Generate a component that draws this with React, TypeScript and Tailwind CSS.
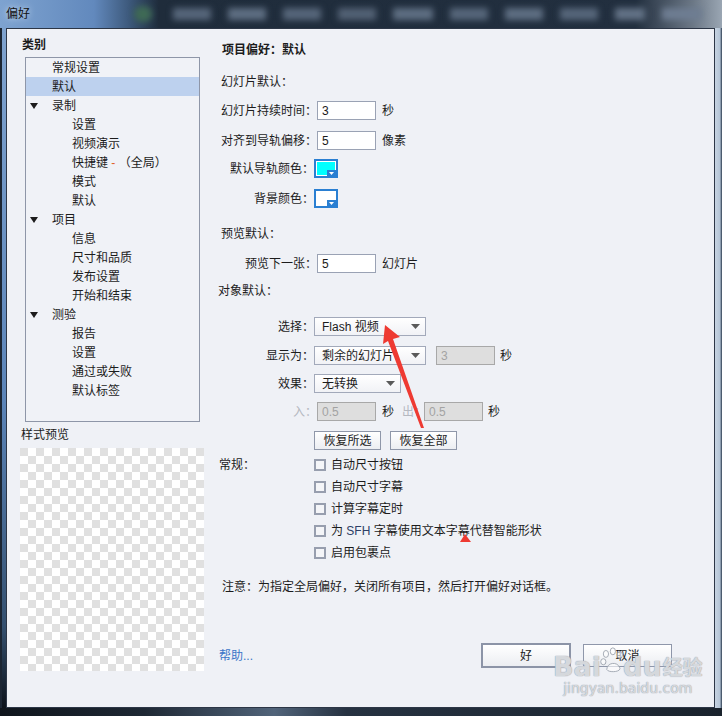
import React from "react";

const tree: { label: React.ReactNode; level: number; open?: boolean; selected?: boolean }[] = [
  { label: "常规设置", level: 1 },
  { label: "默认", level: 1, selected: true },
  { label: "录制", level: 1, open: true },
  { label: "设置", level: 2 },
  { label: "视频演示", level: 2 },
  {
    label: (
      <>
        快捷键 <span className="text-[#e0602a]">-</span> （全局）
      </>
    ),
    level: 2,
  },
  { label: "模式", level: 2 },
  { label: "默认", level: 2 },
  { label: "项目", level: 1, open: true },
  { label: "信息", level: 2 },
  { label: "尺寸和品质", level: 2 },
  { label: "发布设置", level: 2 },
  { label: "开始和结束", level: 2 },
  { label: "测验", level: 1, open: true },
  { label: "报告", level: 2 },
  { label: "设置", level: 2 },
  { label: "通过或失败", level: 2 },
  { label: "默认标签", level: 2 },
];

function Arrow() {
  return (
    <svg width="9" height="5" viewBox="0 0 9 5">
      <polygon points="0,0 9,0 4.5,5" fill="#5a5a5a" />
    </svg>
  );
}

function TextBox({ value, disabled }: { value: string; disabled?: boolean }) {
  return (
    <div
      className={`w-[59px] h-[19px] border flex items-center pl-[4px] ${
        disabled ? "bg-[#dedede] border-[#a8a8a8] text-[#a3a3a3]" : "bg-white border-[#9aa2b4] text-[#1a1a1a]"
      }`}
    >
      {value}
    </div>
  );
}

function Select({ value, wide }: { value: string; wide?: boolean }) {
  return (
    <div
      className={`${wide ? "w-[112px]" : "w-[87px]"} h-[19px] border border-[#a2a9ba] bg-[linear-gradient(180deg,#ffffff,#f1f2f6)] flex items-center justify-between pl-[7px] pr-[5px]`}
    >
      <span>{value}</span>
      <Arrow />
    </div>
  );
}

function Swatch({ color }: { color: string }) {
  return (
    <div className="relative w-[24px] h-[19px] border-2 border-[#2a7fd2] bg-white p-[1px]">
      <div className={`w-full h-full ${color}`} />
      <div className="absolute right-0 bottom-0 w-[9px] h-[6px] bg-[#2a7fd2] flex items-center justify-center">
        <svg width="5" height="3" viewBox="0 0 5 3">
          <polygon points="0,0 5,0 2.5,3" fill="#ffffff" />
        </svg>
      </div>
    </div>
  );
}

function Btn({ children }: { children: React.ReactNode }) {
  return (
    <div className="w-[67px] h-[19px] border border-[#8f97a9] bg-[linear-gradient(180deg,#ffffff,#eceef2)] flex items-center justify-center">
      {children}
    </div>
  );
}

function Check({ label }: { label: React.ReactNode }) {
  return (
    <div className="flex items-center">
      <div className="w-[12px] h-[12px] border-2 border-[#979eae] bg-[#f4f5f8]" />
      <span className="ml-[5px]">{label}</span>
    </div>
  );
}

export default function App() {
  return (
    <div className="relative w-[722px] h-[716px] overflow-hidden flex flex-col bg-[#1b2530] font-['Liberation_Sans','Noto_Sans_CJK_SC',sans-serif] text-[12px] leading-[16px] text-[#1c1c1c]">
      {/* title bar */}
      <div className="h-[28px] flex items-center bg-[linear-gradient(90deg,#7ea3d0_0%,#6289bd_13%,#3c587a_18%,#1f2c3b_22%,#222f3f_88%,#6c7886_96%,#9aa6b3_100%)]">
        <span className="pl-[6px] w-[134px] text-[#111] [text-shadow:0_0_6px_#dbe7f5]">偏好</span>
        <div className="w-[18px] h-[16px] rounded-full bg-[#3f6a55] blur-[3px]" />
        <div className="flex gap-[17px] ml-[21px] blur-[3px]">
          <div className="w-[38px] h-[12px] bg-[#56667a]" />
          <div className="w-[38px] h-[12px] bg-[#5e6e82]" />
          <div className="w-[38px] h-[12px] bg-[#56667a]" />
          <div className="w-[38px] h-[12px] bg-[#526174]" />
          <div className="w-[40px] h-[12px] bg-[#5e6e82]" />
          <div className="w-[38px] h-[12px] bg-[#56667a]" />
          <div className="w-[38px] h-[12px] bg-[#5e6e82]" />
          <div className="w-[38px] h-[12px] bg-[#56667a]" />
          <div className="w-[30px] h-[12px] bg-[#637286]" />
          <div className="w-[40px] h-[12px] bg-[#6e7d92]" />
        </div>
      </div>

      <div className="flex flex-1">
        {/* left frame */}
        <div className="w-[6px] bg-[linear-gradient(180deg,#7fa3cf,#5b84b8_55%,#34506f_88%,#0d131b)] border-l-2 border-[#1c2633]" />

        {/* client area */}
        <div className="flex-1 flex border border-[#2c3646] bg-[#eff1f6]">
          {/* left column */}
          <div className="w-[203px] pl-[13px] pt-[8px] flex flex-col">
            <div className="ml-[2px] h-[16px] font-bold">类别</div>
            <div className="mt-[4px] ml-[5px] w-[175px] h-[365px] border border-[#8e96a8] bg-[#f0f2f7] flex flex-col">
              {tree.map((t, i) => (
                <div key={i} className={`h-[19px] flex items-center ${t.selected ? "bg-[#bdd1ee]" : ""}`}>
                  <div className="w-[26px] pl-[4px] flex items-center">
                    {t.open && (
                      <svg width="8" height="6" viewBox="0 0 8 6">
                        <polygon points="0,0 8,0 4,6" fill="#1c1c1c" />
                      </svg>
                    )}
                  </div>
                  <span className={t.level === 2 ? "ml-[20px]" : ""}>{t.label}</span>
                </div>
              ))}
            </div>
            <div className="mt-[5px] ml-[1px] h-[16px]">样式预览</div>
            <div className="mt-[5px] w-[184px] h-[223px] bg-[image:repeating-conic-gradient(#ffffff_0%_25%,#e0e0e0_0%_50%)] bg-[length:16px_16px]" />
          </div>

          {/* right column */}
          <div className="flex-1 flex flex-col pl-[11px] pt-[13px]">
            <div className="h-[16px] ml-[1px] font-bold">项目偏好：默认</div>
            <div className="h-[16px] mt-[16px]">幻灯片默认：</div>

            <div className="h-[19px] mt-[11px] flex items-center">
              <span className="w-[96px]">幻灯片持续时间：</span>
              <TextBox value="3" />
              <span className="ml-[6px]">秒</span>
            </div>
            <div className="h-[19px] mt-[11px] flex items-center">
              <span className="w-[96px]">对齐到导轨偏移：</span>
              <TextBox value="5" />
              <span className="ml-[6px]">像素</span>
            </div>
            <div className="h-[19px] mt-[9px] flex items-center">
              <span className="w-[93px] text-right">默认导轨颜色：</span>
              <Swatch color="bg-[#00ffff]" />
            </div>
            <div className="h-[19px] mt-[11px] flex items-center">
              <span className="w-[93px] text-right">背景颜色：</span>
              <Swatch color="bg-white" />
            </div>

            <div className="h-[16px] mt-[18px]">预览默认：</div>
            <div className="h-[19px] mt-[12px] flex items-center">
              <span className="w-[96px] text-right">预览下一张：</span>
              <TextBox value="5" />
              <span className="ml-[6px]">幻灯片</span>
            </div>

            <div className="h-[16px] mt-[10px] -ml-[3px]">对象默认：</div>
            <div className="h-[19px] mt-[18px] flex items-center">
              <span className="w-[93px] text-right">选择：</span>
              <Select value="Flash 视频" wide />
            </div>
            <div className="h-[19px] mt-[10px] flex items-center">
              <span className="w-[93px] text-right">显示为：</span>
              <Select value="剩余的幻灯片" wide />
              <div className="ml-[10px]">
                <TextBox value="3" disabled />
              </div>
              <span className="ml-[5px]">秒</span>
            </div>
            <div className="h-[19px] mt-[9px] flex items-center">
              <span className="w-[93px] text-right">效果：</span>
              <Select value="无转换" />
            </div>
            <div className="h-[19px] mt-[9px] flex items-center">
              <span className="w-[96px] text-right text-[#b4b8c0]">入：</span>
              <TextBox value="0.5" disabled />
              <span className="ml-[6px]">秒</span>
              <span className="ml-[8px] w-[22px] text-[#b4b8c0]">出：</span>
              <TextBox value="0.5" disabled />
              <span className="ml-[5px]">秒</span>
            </div>
            <div className="h-[19px] mt-[10px] flex items-center ml-[93px] gap-[9px]">
              <Btn>恢复所选</Btn>
              <Btn>恢复全部</Btn>
            </div>

            <div className="mt-[4px] flex flex-col">
              <div className="h-[22px] flex items-center -ml-[2px]">
                <span className="w-[95px]">常规：</span>
                <Check label="自动尺寸按钮" />
              </div>
              <div className="h-[22px] flex items-center ml-[93px]">
                <Check label="自动尺寸字幕" />
              </div>
              <div className="h-[22px] flex items-center ml-[93px]">
                <Check label="计算字幕定时" />
              </div>
              <div className="h-[22px] flex items-center ml-[93px]">
                <Check
                  label={
                    <>
                      为 <span className="text-[#2d3f66]">SFH</span> 字幕使用文本字幕代替智能形状
                    </>
                  }
                />
              </div>
              <div className="h-[22px] flex items-center ml-[93px]">
                <Check label="启用包裹点" />
              </div>
            </div>

            <div className="h-[16px] mt-[15px] ml-[1px]">注意：为指定全局偏好，关闭所有项目，然后打开偏好对话框。</div>

            <div className="h-[25px] mt-[48px] flex items-center -ml-[2px]">
              <span className="w-[262px] text-[#3a76c8]">帮助...</span>
              <div className="w-[90px] h-[25px] border-2 border-[#8c94a7] bg-[linear-gradient(180deg,#ffffff,#eceef2)] flex items-center justify-center">
                好
              </div>
              <div className="ml-[12px] w-[89px] h-[23px] border border-[#8f97aa] bg-[linear-gradient(180deg,#ffffff,#eceef2)] flex items-center justify-center">
                取消
              </div>
            </div>
          </div>
        </div>

        {/* right frame */}
        <div className="w-[7px] bg-[linear-gradient(90deg,#c6d3e1,#b4c4d6_70%,#2a3a4e)]" />
      </div>

      {/* bottom frame */}
      <div className="h-[8px] bg-[linear-gradient(90deg,#0f151c,#1e2834_20%,#51647a_38%,#263241_48%,#1a232d_100%)]" />

      {/* watermark */}
      <div className="absolute left-[553px] top-[646px] flex flex-col items-center pointer-events-none whitespace-nowrap text-white/60 [text-shadow:0_0_1px_#9aa1ab,0_0_1px_#9aa1ab]">
        <div className="flex items-end h-[34px] text-[27px] leading-[27px] font-bold font-['DejaVu_Sans','Noto_Sans_CJK_SC',sans-serif]">
          <span>Bai</span>
          <svg width="26" height="28" viewBox="0 0 30 30" className="mb-[6px] -mx-[2px]">
            <g fill="#ffffff" fillOpacity="0.6" stroke="#9aa1ab" strokeWidth="1">
              <ellipse cx="8" cy="8" rx="3" ry="4" />
              <ellipse cx="16" cy="5" rx="3" ry="4" />
              <ellipse cx="24" cy="9" rx="3" ry="4" />
              <ellipse cx="5" cy="17" rx="3" ry="3.5" />
              <path d="M9 26 C9 18 21 16 24 24 C26 29 11 30 9 26 Z" />
            </g>
          </svg>
          <span>du</span>
          <span className="ml-[1px] text-[20px] leading-[24px]">经验</span>
        </div>
        <div className="text-[14px] leading-[16px] font-['DejaVu_Sans',sans-serif]">jingyan.baidu.com</div>
      </div>

      {/* red annotation */}
      <svg className="absolute left-0 top-0 pointer-events-none" width="722" height="716" viewBox="0 0 722 716">
        <polygon points="385,325 400,337 393,339 424,428 421,428 388,341 383,344" fill="#ee3a32" />
        <polygon points="465,534 471,542 460,542" fill="#ee3a32" />
      </svg>
    </div>
  );
}
